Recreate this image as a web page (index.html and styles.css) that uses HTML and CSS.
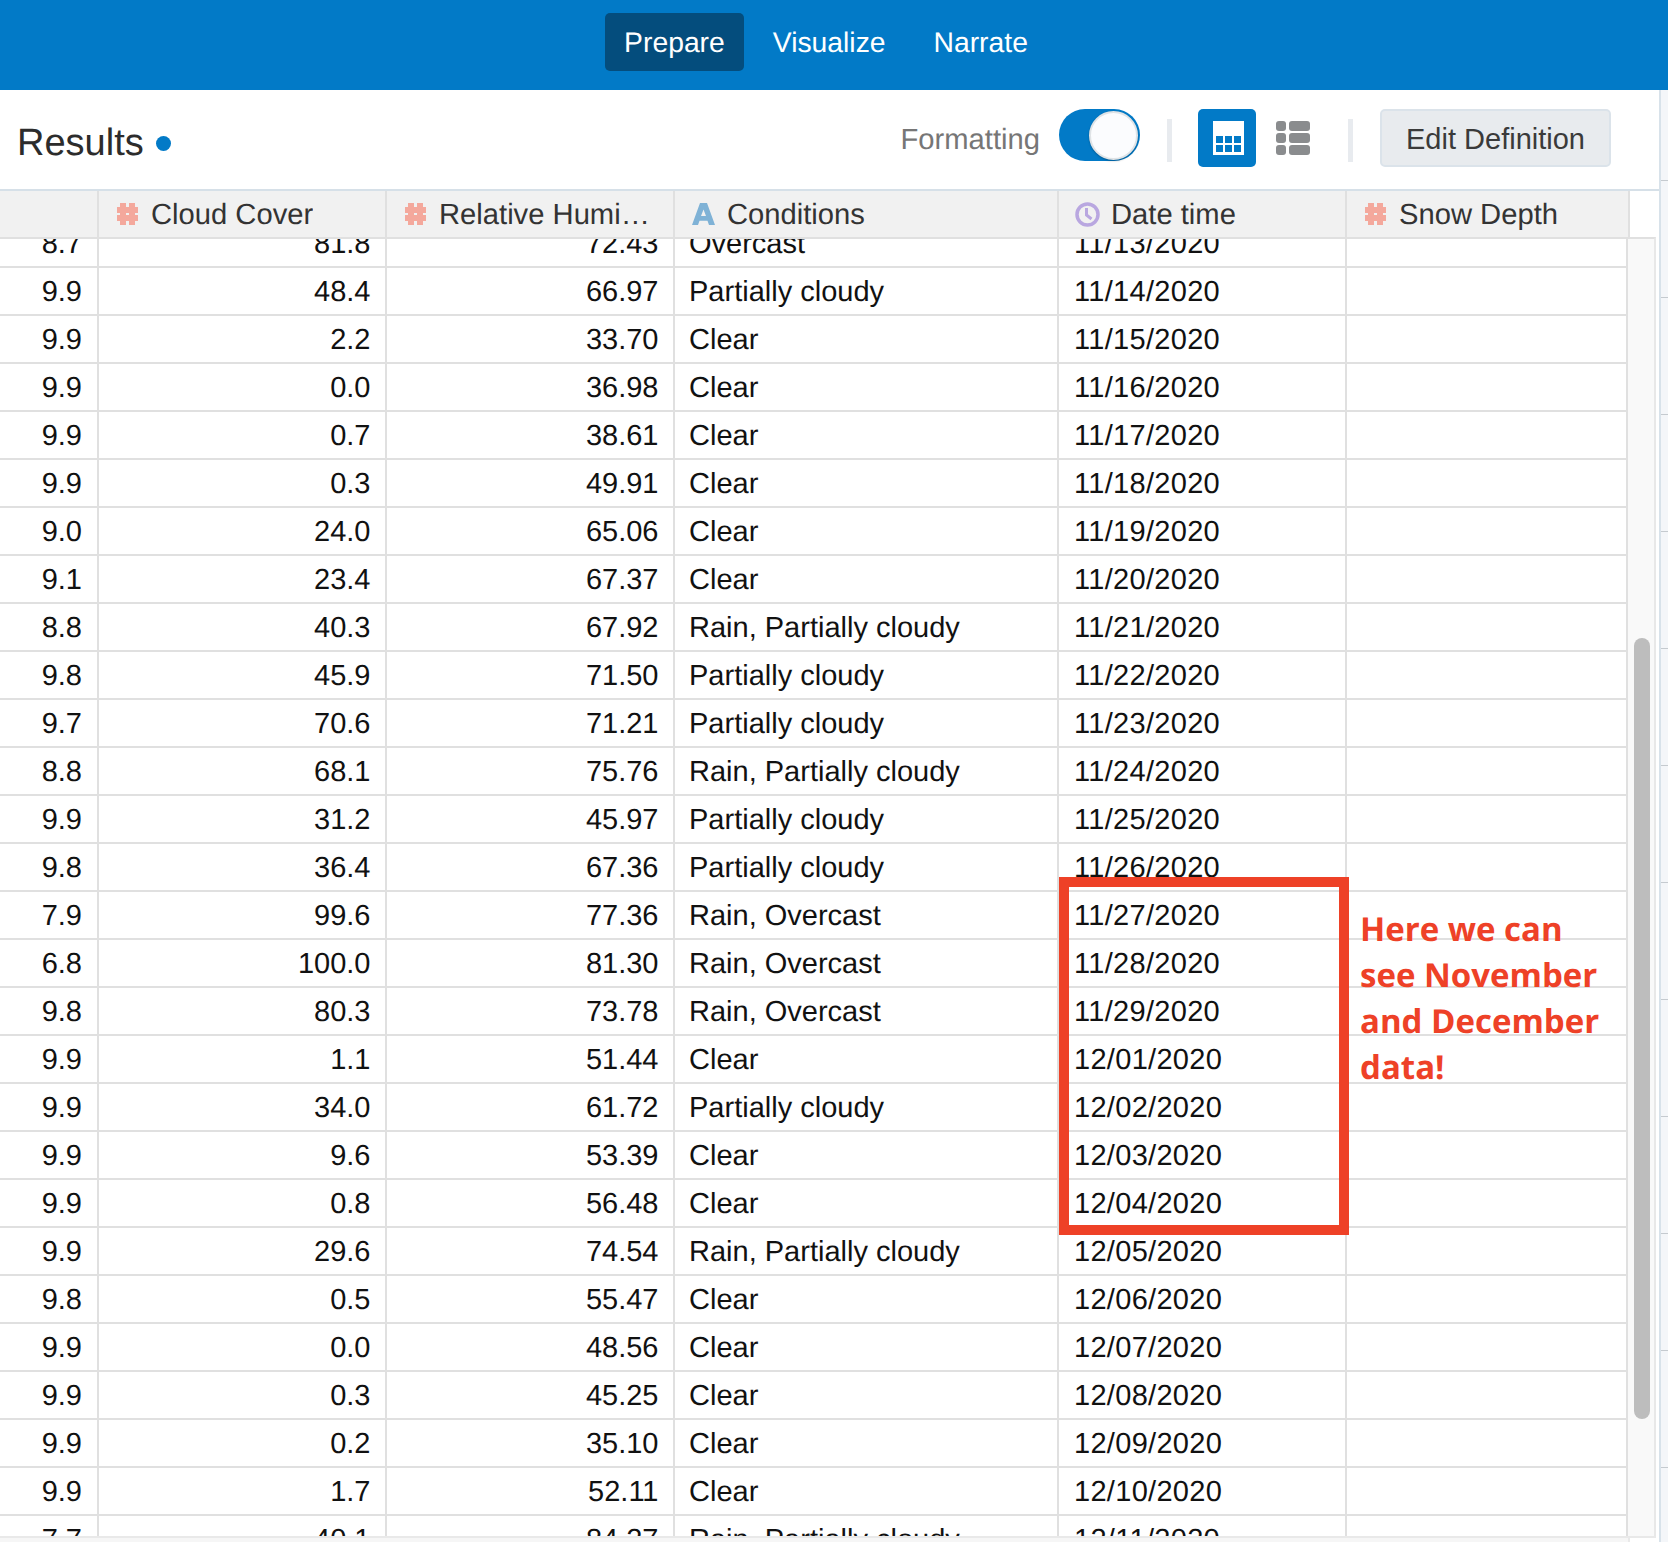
FILE: index.html
```html
<!DOCTYPE html>
<html lang="en">
<head>
<meta charset="utf-8">
<title>Results</title>
<link rel="stylesheet" href="styles.css">
</head>
<body>
<svg class="defs" width="0" height="0" aria-hidden="true">
  <symbol id="i-hash" viewBox="0 0 21 22"><path d="M3 0h6v4h3V0h6v4h3v6h-3v2h3v6h-3v4h-6v-4H9v4H3v-4H0v-6h3v-2H0V4h3zM9 10v2h3v-2z" fill="#f4a89c" fill-rule="evenodd"/></symbol>
  <symbol id="i-a" viewBox="0 0 23 22"><path d="M8 0h7l8 22h-6l-1.500-4.300H7.500L6 22H0zM11.500 6.500L9 13h5z" fill="#7fb2d6" fill-rule="evenodd"/></symbol>
  <symbol id="i-clock" viewBox="0 0 25 25"><circle cx="12.500" cy="12.500" r="10.500" fill="none" stroke="#b9a7e0" stroke-width="3.500"/><path d="M11.500 6v7l5 4" fill="none" stroke="#b9a7e0" stroke-width="3"/></symbol>
</svg>
<div class="app">
  <nav class="nav">
    <a class="nav-item active">Prepare</a>
    <a class="nav-item">Visualize</a>
    <a class="nav-item">Narrate</a>
  </nav>
  <div class="workspace">
    <main class="main">
      <header class="toolbar">
        <h1 class="title">Results<span class="dot"></span></h1>
        <div class="tools">
          <span class="fmt-label">Formatting</span>
          <span class="toggle"><span class="knob"></span></span>
          <span class="sep"></span>
          <span class="view-btn">
            <svg width="31" height="34" viewBox="0 0 31 34"><rect width="31" height="34" fill="#fff"/><g fill="#027ac7"><rect x="3" y="15" width="7" height="7"/><rect x="12" y="15" width="7" height="7"/><rect x="21" y="15" width="7" height="7"/><rect x="3" y="24" width="7" height="7"/><rect x="12" y="24" width="7" height="7"/><rect x="21" y="24" width="7" height="7"/></g></svg>
          </span>
          <svg class="list-icon" width="34" height="34" viewBox="0 0 34 34"><g fill="#8a8c8e"><rect width="10" height="10" rx="3"/><rect x="13" width="21" height="10" rx="3"/><rect y="12" width="10" height="10" rx="3"/><rect x="13" y="12" width="21" height="10" rx="3"/><rect y="24" width="10" height="10" rx="3"/><rect x="13" y="24" width="21" height="10" rx="3"/></g></svg>
          <span class="sep sep-wide"></span>
          <button class="edit-btn">Edit Definition</button>
        </div>
      </header>
      <div class="thead">
        <div class="th th-first"></div>
        <div class="th"><svg class="ty ty-hash"><use href="#i-hash"/></svg><span class="th-text">Cloud Cover</span></div>
        <div class="th"><svg class="ty ty-hash"><use href="#i-hash"/></svg><span class="th-text">Relative Humidity</span></div>
        <div class="th th-wide"><svg class="ty ty-a"><use href="#i-a"/></svg><span class="th-text">Conditions</span></div>
        <div class="th"><svg class="ty ty-clock"><use href="#i-clock"/></svg><span class="th-text">Date time</span></div>
        <div class="th th-last"><svg class="ty ty-hash"><use href="#i-hash"/></svg><span class="th-text">Snow Depth</span></div>
      </div>
      <div class="tbody">
        <div class="scroller">
          <div class="rows">
            <div class="row"><span class="c n1">8.7</span><span class="c n">81.8</span><span class="c n">72.43</span><span class="c t w">Overcast</span><span class="c d">11/13/2020</span><span class="c e"></span></div>
            <div class="row"><span class="c n1">9.9</span><span class="c n">48.4</span><span class="c n">66.97</span><span class="c t w">Partially cloudy</span><span class="c d">11/14/2020</span><span class="c e"></span></div>
            <div class="row"><span class="c n1">9.9</span><span class="c n">2.2</span><span class="c n">33.70</span><span class="c t w">Clear</span><span class="c d">11/15/2020</span><span class="c e"></span></div>
            <div class="row"><span class="c n1">9.9</span><span class="c n">0.0</span><span class="c n">36.98</span><span class="c t w">Clear</span><span class="c d">11/16/2020</span><span class="c e"></span></div>
            <div class="row"><span class="c n1">9.9</span><span class="c n">0.7</span><span class="c n">38.61</span><span class="c t w">Clear</span><span class="c d">11/17/2020</span><span class="c e"></span></div>
            <div class="row"><span class="c n1">9.9</span><span class="c n">0.3</span><span class="c n">49.91</span><span class="c t w">Clear</span><span class="c d">11/18/2020</span><span class="c e"></span></div>
            <div class="row"><span class="c n1">9.0</span><span class="c n">24.0</span><span class="c n">65.06</span><span class="c t w">Clear</span><span class="c d">11/19/2020</span><span class="c e"></span></div>
            <div class="row"><span class="c n1">9.1</span><span class="c n">23.4</span><span class="c n">67.37</span><span class="c t w">Clear</span><span class="c d">11/20/2020</span><span class="c e"></span></div>
            <div class="row"><span class="c n1">8.8</span><span class="c n">40.3</span><span class="c n">67.92</span><span class="c t w">Rain, Partially cloudy</span><span class="c d">11/21/2020</span><span class="c e"></span></div>
            <div class="row"><span class="c n1">9.8</span><span class="c n">45.9</span><span class="c n">71.50</span><span class="c t w">Partially cloudy</span><span class="c d">11/22/2020</span><span class="c e"></span></div>
            <div class="row"><span class="c n1">9.7</span><span class="c n">70.6</span><span class="c n">71.21</span><span class="c t w">Partially cloudy</span><span class="c d">11/23/2020</span><span class="c e"></span></div>
            <div class="row"><span class="c n1">8.8</span><span class="c n">68.1</span><span class="c n">75.76</span><span class="c t w">Rain, Partially cloudy</span><span class="c d">11/24/2020</span><span class="c e"></span></div>
            <div class="row"><span class="c n1">9.9</span><span class="c n">31.2</span><span class="c n">45.97</span><span class="c t w">Partially cloudy</span><span class="c d">11/25/2020</span><span class="c e"></span></div>
            <div class="row"><span class="c n1">9.8</span><span class="c n">36.4</span><span class="c n">67.36</span><span class="c t w">Partially cloudy</span><span class="c d">11/26/2020</span><span class="c e"></span></div>
            <div class="row"><span class="c n1">7.9</span><span class="c n">99.6</span><span class="c n">77.36</span><span class="c t w">Rain, Overcast</span><span class="c d">11/27/2020</span><span class="c e"></span></div>
            <div class="row"><span class="c n1">6.8</span><span class="c n">100.0</span><span class="c n">81.30</span><span class="c t w">Rain, Overcast</span><span class="c d">11/28/2020</span><span class="c e"></span></div>
            <div class="row"><span class="c n1">9.8</span><span class="c n">80.3</span><span class="c n">73.78</span><span class="c t w">Rain, Overcast</span><span class="c d">11/29/2020</span><span class="c e"></span></div>
            <div class="row"><span class="c n1">9.9</span><span class="c n">1.1</span><span class="c n">51.44</span><span class="c t w">Clear</span><span class="c d">12/01/2020</span><span class="c e"></span></div>
            <div class="row"><span class="c n1">9.9</span><span class="c n">34.0</span><span class="c n">61.72</span><span class="c t w">Partially cloudy</span><span class="c d">12/02/2020</span><span class="c e"></span></div>
            <div class="row"><span class="c n1">9.9</span><span class="c n">9.6</span><span class="c n">53.39</span><span class="c t w">Clear</span><span class="c d">12/03/2020</span><span class="c e"></span></div>
            <div class="row"><span class="c n1">9.9</span><span class="c n">0.8</span><span class="c n">56.48</span><span class="c t w">Clear</span><span class="c d">12/04/2020</span><span class="c e"></span></div>
            <div class="row"><span class="c n1">9.9</span><span class="c n">29.6</span><span class="c n">74.54</span><span class="c t w">Rain, Partially cloudy</span><span class="c d">12/05/2020</span><span class="c e"></span></div>
            <div class="row"><span class="c n1">9.8</span><span class="c n">0.5</span><span class="c n">55.47</span><span class="c t w">Clear</span><span class="c d">12/06/2020</span><span class="c e"></span></div>
            <div class="row"><span class="c n1">9.9</span><span class="c n">0.0</span><span class="c n">48.56</span><span class="c t w">Clear</span><span class="c d">12/07/2020</span><span class="c e"></span></div>
            <div class="row"><span class="c n1">9.9</span><span class="c n">0.3</span><span class="c n">45.25</span><span class="c t w">Clear</span><span class="c d">12/08/2020</span><span class="c e"></span></div>
            <div class="row"><span class="c n1">9.9</span><span class="c n">0.2</span><span class="c n">35.10</span><span class="c t w">Clear</span><span class="c d">12/09/2020</span><span class="c e"></span></div>
            <div class="row"><span class="c n1">9.9</span><span class="c n">1.7</span><span class="c n">52.11</span><span class="c t w">Clear</span><span class="c d">12/10/2020</span><span class="c e"></span></div>
            <div class="row"><span class="c n1">7.7</span><span class="c n">40.1</span><span class="c n">84.27</span><span class="c t w">Rain, Partially cloudy</span><span class="c d">12/11/2020</span><span class="c e"></span></div>
          </div>
        </div>
        <div class="track"><div class="thumb"></div></div>
      </div>
      <div class="tfoot"><div class="tfoot-main"></div><div class="tfoot-corner"></div></div>
    </main>
    <aside class="strip"></aside>
  </div>
  <div class="callout-box"></div>
  <p class="callout-text">Here we can<br>see November<br>and December<br>data!</p>
</div>
</body>
</html>
```
FILE: styles.css
```css
* { box-sizing: border-box; }
html, body { margin: 0; padding: 0; background: #fff; }
body { font-family: "Liberation Sans", Arial, sans-serif; text-rendering: geometricPrecision; }
.defs { position: absolute; }

.app {
  position: relative;
  width: 1668px;
  height: 1542px;
  display: flex;
  flex-direction: column;
  overflow: hidden;
}

/* top nav */
.nav {
  flex: 0 0 90px;
  display: flex;
  justify-content: center;
  align-items: flex-start;
  gap: 10px;
  padding: 13px 16px 0 0;
  background: #027ac7;
}
.nav-item {
  height: 58px;
  line-height: 58px;
  padding: 0 19px;
  border-radius: 5px;
  color: #fff;
  font-size: 28.300px;
}
.nav-item.active { background: #044d7d; }

.workspace { flex: 1; display: flex; min-height: 0; }
.main {
  width: 1661px;
  display: flex;
  flex-direction: column;
  border-right: 2px solid #d8e2ea;
}
.strip {
  flex: 1;
  background: repeating-linear-gradient(to bottom, #f4f6f9 0, #f4f6f9 116px, #c5cacf 116px, #c5cacf 117px);
  background-position: 0 -26px;
}

/* toolbar */
.toolbar {
  flex: 0 0 101px;
  display: flex;
  align-items: flex-start;
  justify-content: space-between;
  padding: 19px 48px 0 17px;
  border-bottom: 2px solid #d6e0e8;
}
.title {
  margin: 0;
  display: flex;
  align-items: center;
  gap: 12px;
  height: 68px;
  font-size: 38px;
  font-weight: 400;
  color: #2c2c2c;
}
.dot { width: 15px; height: 15px; border-radius: 50%; background: #027ac7; }
.tools { display: flex; align-items: center; height: 58px; }
.fmt-label { font-size: 29.200px; padding-top: 4px; color: #767676; margin-right: 19px; }
.toggle {
  position: relative;
  width: 81px;
  height: 52px;
  margin: -6px 27px 0 0;
  border-radius: 26px;
  background: #027ac7;
}
.knob {
  position: absolute;
  top: 2px;
  right: 2px;
  width: 49px;
  height: 49px;
  border-radius: 50%;
  background: #fbfcfe;
  border: 2px solid #dfe3e6;
  box-shadow: 0 1px 2px rgba(0,0,0,.25);
}
.sep { width: 5px; height: 43px; margin: 5px 26px 0 0; background: #e8ebef; }
.sep-wide { margin: 5px 27px 0 38px; }
.view-btn {
  width: 58px;
  height: 58px;
  display: flex;
  align-items: center;
  justify-content: center;
  border-radius: 5px;
  background: #027ac7;
}
.view-btn svg { display: block; margin-left: 2px; }
.list-icon { margin-left: 20px; display: block; }
.edit-btn {
  width: 231px;
  height: 58px;
  padding: 2px 0 0;
  border: 2px solid #dbe3ea;
  border-radius: 5px;
  background: #e8ebee;
  color: #3a3a3a;
  font: 29px "Liberation Sans", Arial, sans-serif;
}

/* header row */
.thead { flex: 0 0 48px; display: flex; width: 1630px; }
.th {
  flex: 0 0 288px;
  display: flex;
  align-items: center;
  height: 48px;
  padding: 0 15px 0 16px;
  background: #f1f1f1;
  border-right: 2px solid #e0e0e0;
  border-bottom: 2px solid #e0e0e0;
  color: #333;
  font-size: 29.200px;
  min-width: 0;
}
.th-first { flex-basis: 99px; }
.th-wide { flex-basis: 384px; }
.th-last { flex-basis: 283px; }
.ty { flex: 0 0 25px; margin-right: 11px; }
.ty-hash { width: 21px; height: 22px; flex-basis: 21px; margin: 0 13px 0 2px; }
.ty-a { width: 23px; height: 22px; flex-basis: 23px; margin: 0 12px 0 1px; }
.ty-clock { width: 25px; height: 25px; }
.th-text { padding-top: 2px; white-space: nowrap; overflow: hidden; text-overflow: ellipsis; min-width: 0; }

/* body */
.tbody { flex: 1; display: flex; min-height: 0; }
.scroller { width: 1628px; overflow: hidden; }
.rows { margin-top: -19px; }
.row { display: flex; height: 48px; border-bottom: 2px solid #e0e0e0; }
.c {
  flex: 0 0 288px;
  display: block;
  height: 46px;
  padding: 0 15px;
  line-height: 48px;
  border-right: 2px solid #e0e0e0;
  color: #111;
  font-size: 29px;
  white-space: nowrap;
}
.t { padding-left: 14px; }
.d { letter-spacing: 0.300px; }
.n { text-align: right; padding-right: 14.500px; }
.n1 { text-align: right; flex-basis: 99px; }
.w { flex-basis: 384px; }
.e { flex-basis: 281px; }

.track {
  width: 28px;
  margin-top: -2px;
  border-top: 2px solid #e0e0e0;
  border-right: 2px solid #e8e8e8;
  background: #f9f9f9;
}
.thumb {
  width: 16px;
  height: 781px;
  margin: 399px 0 0 6px;
  border-radius: 8px;
  background: #bdbdbd;
}
.tfoot { flex: 0 0 6px; display: flex; width: 1656px; }
.tfoot-main { width: 1628px; background: #f6f6f6; border-top: 2px solid #e9e9e9; }
.tfoot-corner { flex: 1; background: #fff; border-top: 2px solid #e9e9e9; border-left: 2px solid #e9e9e9; }

/* annotation drawn over the table */
.callout-box {
  position: absolute;
  left: 1059px;
  top: 877px;
  width: 290px;
  height: 358px;
  border: 10px solid #ee4127;
}
.callout-text {
  position: absolute;
  left: 1360px;
  top: 906px;
  margin: 0;
  color: #ee4127;
  font: 700 33px/46px "Open Sans", sans-serif;
  white-space: nowrap;
}
```
